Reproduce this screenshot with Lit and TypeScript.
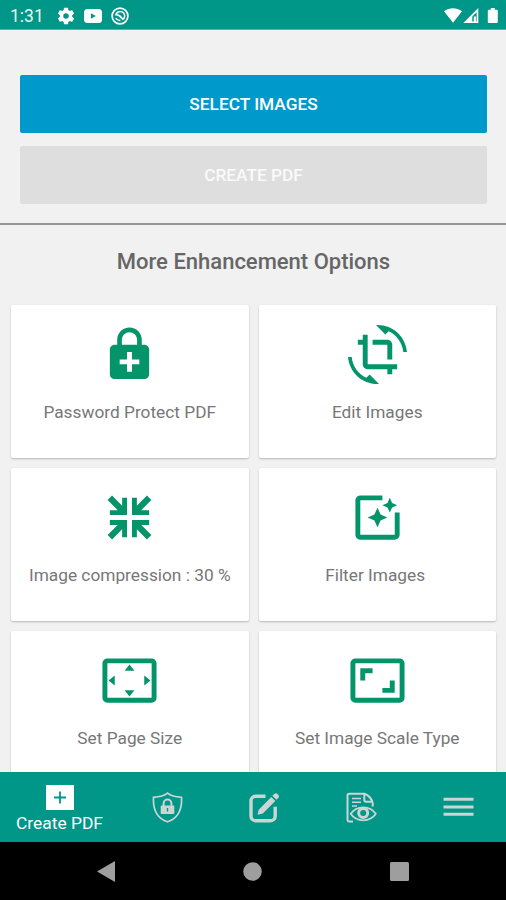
import { LitElement, html, svg, css } from "lit";
import { customElement, property } from "lit/decorators.js";

const FRAME =
  "M21 3H3c-1.1 0-2 .9-2 2v14c0 1.1.9 2 2 2h18c1.1 0 2-.9 2-2V5c0-1.1-.9-2-2-2zm0 16.01H3V4.99h18v14.02z";

const glyphs = {
  lock: svg`<path d="M18 8h-1V6c0-2.76-2.24-5-5-5S7 3.24 7 6v2H6c-1.1 0-2 .9-2 2v10c0 1.1.9 2 2 2h12c1.1 0 2-.9 2-2V10c0-1.1-.9-2-2-2zM8.9 6c0-1.71 1.39-3.1 3.1-3.1s3.1 1.39 3.1 3.1v2H8.9V6zM16 16h-3v3h-2v-3H8v-2h3v-3h2v3h3v2z"/>`,
  crop: svg`<path d="M7.47 21.49C4.2 19.93 1.86 16.76 1.5 13H0c.51 6.16 5.66 11 11.95 11 .23 0 .44-.02.66-.03L8.8 20.15l-1.33 1.34zM12.05 0c-.23 0-.44.02-.66.04l3.81 3.81 1.33-1.33C19.8 4.07 22.14 7.24 22.5 11H24c-.51-6.16-5.66-11-11.95-11zM16 14h2V8c0-1.11-.9-2-2-2h-6v2h6v6zm-8 2V4H6v2H4v2h2v8c0 1.1.89 2 2 2h8v2h2v-2h2v-2H8z"/>`,
  compress: svg`
    <path d="M9 4h2v7H4V9h3.2L3.100 4.900 4.900 3.100 9 7.200zM15 4h-2v7h7V9h-3.200l4.100-4.100-1.800-1.800L15 7.200zM9 20h2v-7H4v2h3.200l-4.100 4.100 1.800 1.800L9 16.800zM15 20h-2v-7h7v2h-3.200l4.100 4.100-1.800 1.800-4.100-4.100z"/>`,
  filter: svg`<path d="M19.02 10v9H5V5h9V3H5.02c-1.1 0-2 .9-2 2v14c0 1.1.9 2 2 2H19c1.1 0 2-.9 2-2v-9h-1.98zM17 10l.94-2.06L20 7l-2.06-.94L17 4l-.94 2.06L14 7l2.06.94L17 10zM13.25 10.75L12 8l-1.25 2.75L8 12l2.75 1.25L12 16l1.25-2.75L16 12l-2.75-1.25z"/>`,
  page: svg`<path d="M12.01 5.5L10 8h4l-1.99-2.5zM18 10v4l2.5-1.99L18 10zM6 10l-2.5 2.01L6 14v-4zM14 16h-4l2.01 2.5L14 16z"/><path d=${FRAME}/>`,
  scale: svg`<path d="M19 12h-2v3h-3v2h5v-5zM7 9h3V7H5v5h2V9z"/><path d=${FRAME}/>`,
};

type Glyph = keyof typeof glyphs;

@customElement("option-card")
class OptionCard extends LitElement {
  @property() label = "";
  @property() icon: Glyph = "lock";

  static styles = css`
    :host {
      display: flex;
      flex-direction: column;
      align-items: center;
      box-sizing: border-box;
      height: 153px;
      padding-top: 20px;
      background: #fff;
      border-radius: 2px;
      box-shadow: 0 1px 2px rgba(0, 0, 0, 0.24);
    }
    .icon {
      width: 59px;
      height: 59px;
      flex: none;
      fill: #03946a;
    }
    .label {
      margin-top: 15.5px;
      font-size: 17.3px;
      line-height: 24px;
      color: #777;
      white-space: pre;
    }
  `;

  render() {
    return html`
      <svg class="icon" viewBox="0 0 24 24">${glyphs[this.icon]}</svg>
      <div class="label">${this.label}</div>
    `;
  }
}

@customElement("app-root")
class AppRoot extends LitElement {
  static styles = css`
    :host {
      display: flex;
      flex-direction: column;
      width: 506px;
      height: 900px;
      overflow: hidden;
      background: #f1f1f1;
      font-family: Roboto, "Noto Sans", sans-serif;
    }
    svg {
      display: block;
      flex: none;
    }
    .status {
      flex: none;
      display: flex;
      align-items: center;
      box-sizing: border-box;
      height: 30px;
      padding: 2px 7px 0 10px;
      background: #009688;
      border-bottom: 1px solid #55b3a8;
      color: #e8f5f3;
      font-size: 17.5px;
    }
    .time {
      width: 47px;
    }
    .notices {
      display: flex;
      gap: 9px;
      flex: 1;
      align-items: center;
    }
    .signals {
      display: flex;
      align-items: center;
    }
    .actions {
      flex: none;
      display: flex;
      flex-direction: column;
      gap: 13px;
      padding: 45px 19px 19px 20px;
      border-bottom: 2px solid #969696;
    }
    .button {
      height: 58px;
      display: flex;
      align-items: center;
      justify-content: center;
      border-radius: 2px;
      font-size: 17.3px;
      font-weight: 500;
      color: #fff;
      box-sizing: border-box;
    }
    .primary {
      background: #0099cc;
    }
    .disabled {
      background: #dedede;
      color: #fafafa;
    }
    .title {
      flex: none;
      margin: 0;
      padding: 22px 0 0 1px;
      height: 60px;
      box-sizing: border-box;
      line-height: 30px;
      text-align: center;
      font-size: 22px;
      font-weight: 500;
      color: #666;
    }
    .options {
      flex: 1;
      min-height: 0;
      overflow: hidden;
      display: grid;
      grid-template-columns: 1fr 1fr;
      grid-auto-rows: 153px;
      gap: 10px;
      padding: 20px 10px 0 11px;
    }
    .tabs {
      flex: none;
      display: flex;
      height: 70px;
      background: #009688;
      color: #ccd5d3;
    }
    .tab {
      flex: none;
      display: flex;
      justify-content: center;
      padding-top: 20px;
      box-sizing: border-box;
      width: 97px;
    }
    .tab:last-child {
      width: 96px;
    }
    .tab.active {
      flex-direction: column;
      align-items: center;
      justify-content: flex-start;
      width: 119px;
      padding-top: 13px;
      color: #fff;
      font-size: 17.4px;
      line-height: 20px;
      gap: 3px;
    }
    .system {
      flex: none;
      display: flex;
      align-items: center;
      justify-content: space-between;
      box-sizing: border-box;
      height: 58px;
      padding: 0 97px;
      background: #000;
    }
  `;

  private cards: { label: string; icon: Glyph }[] = [
    { label: "Password Protect PDF", icon: "lock" },
    { label: "Edit Images", icon: "crop" },
    { label: "Image compression : 30 %", icon: "compress" },
    { label: "Filter Images ", icon: "filter" },
    { label: "Set Page Size", icon: "page" },
    { label: "Set Image Scale Type", icon: "scale" },
  ];

  render() {
    return html`
      <div class="status">
        <span class="time">1:31</span>
        <div class="notices">
          <svg width="18" height="18" viewBox="1.500 1.500 21 21" fill="#fff">
            <path d="M19.14 12.94c.04-.3.06-.61.06-.94 0-.32-.02-.64-.07-.94l2.03-1.58c.18-.14.23-.41.12-.61l-1.92-3.32c-.12-.22-.37-.29-.59-.22l-2.39.96c-.5-.38-1.03-.7-1.62-.94l-.36-2.54c-.04-.24-.24-.41-.48-.41h-3.84c-.24 0-.43.17-.47.41l-.36 2.54c-.59.24-1.13.57-1.62.94l-2.39-.96c-.22-.08-.47 0-.59.22L2.74 8.87c-.12.21-.08.47.12.61l2.03 1.58c-.05.3-.09.63-.09.94s.02.64.07.94l-2.03 1.58c-.18.14-.23.41-.12.61l1.92 3.32c.12.22.37.29.59.22l2.39-.96c.5.38 1.03.7 1.62.94l.36 2.54c.05.24.24.41.48.41h3.84c.24 0 .44-.17.47-.41l.36-2.54c.59-.24 1.13-.56 1.62-.94l2.39.96c.22.08.47 0 .59-.22l1.92-3.32c.12-.22.07-.47-.12-.61l-2.01-1.58zM12 15.2a3.2 3.2 0 1 1 0-6.4 3.2 3.2 0 0 1 0 6.4z"/>
          </svg>
          <svg width="18" height="14" viewBox="0 0 18 14">
            <rect width="18" height="14" rx="3.5" fill="#fff"/>
            <path d="M7 4.2v5.6L11.8 7z" fill="#009688"/>
          </svg>
          <svg width="18" height="18" viewBox="0 0 18 18" fill="none" stroke="#fff">
            <circle cx="9" cy="9" r="7.9" stroke-width="1.7"/>
            <path d="M4.700 8.500a4.500 4.500 0 1 1 7.600 3.700M4.800 11a4.600 4.600 0 0 0 4.600 2.500" stroke-width="1.500"/>
            <path d="M5.500 8.300c2.600-1.400 3.200 1.700 5 1.500M7.800 8.300l4.700 4.300" stroke-width="1.700"/>
          </svg>
        </div>
        <div class="signals">
          <svg width="55" height="18" viewBox="0 0 55 18" fill="#fff">
            <path d="M0 4.3C5.3.2 12.7.2 18 4.3L9 15.7z"/>
            <path d="M34.3 1v15H19.3zM32.6 5.2l-4.3 4.3v4.9h1.5V9.6h2.1v4.8h.7z" fill-rule="evenodd"/>
            <path d="M46.8 1h4v1.7h1.7c.8 0 1.3.5 1.3 1.3v10.7c0 .8-.5 1.3-1.3 1.3h-7.4c-.8 0-1.3-.5-1.3-1.3V4c0-.8.5-1.3 1.3-1.3h1.7z"/>
          </svg>
        </div>
      </div>

      <div class="actions">
        <div class="button primary">SELECT IMAGES</div>
        <div class="button disabled">CREATE PDF</div>
      </div>

      <h2 class="title">More Enhancement Options</h2>

      <div class="options">
        ${this.cards.map(
          (c) => html`<option-card .label=${c.label} .icon=${c.icon}></option-card>`
        )}
      </div>

      <div class="tabs">
        <div class="tab active">
          <svg width="28" height="25" viewBox="0 0 28 25">
            <rect width="28" height="25" fill="#fff"/>
            <path d="M14 6.5v12M8 12.5h12" stroke="#009688" stroke-width="1.8"/>
          </svg>
          <span>Create PDF</span>
        </div>
        <div class="tab">
          <svg width="31" height="31" viewBox="0 0 31 31" fill="none" stroke="currentColor">
            <path d="M15.5 1.2c3.6 3 8.6 3.8 14 4.1.7 12-3 20.7-14 24.5C4.500 26 .8 17.300 1.500 5.300c5.400-.3 10.400-1.100 14-4.100z" stroke-width="1.7"/>
            <rect x="8.700" y="13.500" width="13.600" height="8.500" rx="1" fill="currentColor" stroke="none"/>
            <path d="M11.600 14v-2.600a3.900 3.900 0 0 1 7.800 0V14" stroke-width="2"/>
            <path d="M15.500 16v3.500" stroke="#009688" stroke-width="1.400"/>
          </svg>
        </div>
        <div class="tab">
          <svg width="31" height="31" viewBox="0 0 31 31" fill="none" stroke="currentColor">
            <path d="M16.500 4.300H6.500a4.500 4.500 0 0 0-4.500 4.500v15.400a4.500 4.500 0 0 0 4.500 4.500h15.200a4.500 4.500 0 0 0 4.500-4.500v-9.500" stroke-width="3.400"/>
            <path d="M8.500 22.800l1.200-5.100L22.300 4.900l4 4-12.500 12.600zM23.400 3.800l2-2c.8-.8 2-.8 2.800 0l1.200 1.200c.8.800.8 2 0 2.800l-2 2z" fill="currentColor" stroke="none"/>
          </svg>
        </div>
        <div class="tab">
          <svg width="31" height="31" viewBox="0 0 31 31" fill="none" stroke="currentColor">
            <path d="M7 29.400H2.800c-.8 0-1.300-.5-1.300-1.300V3.500c0-1.100.7-1.800 1.800-1.800h15.200c3.800 1.200 7.500 5.100 8.200 9.600v3.200M18.300 2v6c0 1.100.6 1.700 1.700 1.700h6.300" stroke-width="2"/>
            <path d="M6 6.500h9M6 10.300h9M6 14h5" stroke-width="1.600"/>
            <path d="M4.700 21.800c5.800-8.700 19.300-8.700 25.100 0-5.800 8.700-19.300 8.700-25.100 0z" fill="#009688" stroke-width="1.800"/>
            <circle cx="17.200" cy="21" r="4.500" stroke-width="3"/>
          </svg>
        </div>
        <div class="tab">
          <svg width="31" height="31" viewBox="0 0 31 31" fill="none" stroke="currentColor">
            <path d="M.5 7.300h30M.5 15h30M.5 22.300h30" stroke-width="2.900"/>
          </svg>
        </div>
      </div>

      <div class="system">
        <svg width="18" height="21" viewBox="0 0 18 21" fill="#9e9e9e"><path d="M18 0v21L0 10.500z"/></svg>
        <svg width="19" height="19" viewBox="0 0 19 19" fill="#9e9e9e"><circle cx="9.500" cy="9.500" r="9.300"/></svg>
        <svg width="19" height="19" viewBox="0 0 19 19" fill="#9e9e9e"><rect width="19" height="19" rx="1.500"/></svg>
      </div>
    `;
  }
}
